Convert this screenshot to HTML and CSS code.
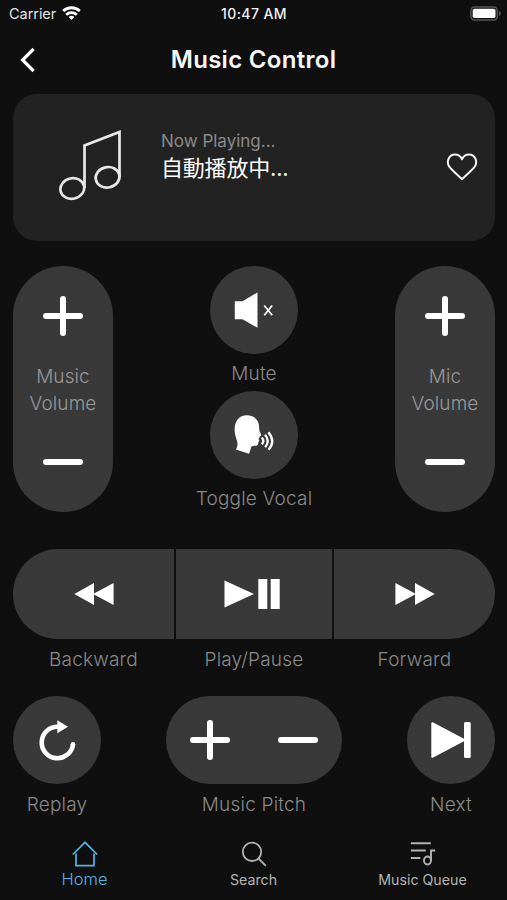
FILE: index.html
```html
<!DOCTYPE html>
<html lang="en">
<head>
<meta charset="utf-8">
<title>Music Control</title>
<link rel="stylesheet" href="styles.css">
</head>
<body>
<div class="app">
  <div class="status">
    <div class="carrier"><span>Carrier</span>
      <svg width="19" height="15" viewBox="0 0 19 15" fill="none" stroke="#fff" stroke-width="2.8"><path d="M1.200 5.100a12 12 0 0 1 16.600 0M4.200 8.800a7.700 7.700 0 0 1 10.600 0"/><path d="M9.500 14 6.600 11.100a4.200 4.200 0 0 1 5.800 0z" fill="#fff" stroke="none"/></svg>
    </div>
    <time class="clock">10:47 AM</time>
    <svg class="battery" width="32" height="15" viewBox="0 0 32 15"><rect x=".9" y=".9" width="26.4" height="13" rx="3.6" fill="none" stroke="#555" stroke-width="1.5"/><rect x="2.7" y="2.7" width="22.8" height="9.4" rx="1.8" fill="#fff"/><path d="M29 5a2.6 2.6 0 0 1 0 5z" fill="#555"/></svg>
  </div>
  <header class="nav">
    <svg class="back" width="18" height="26" viewBox="0 0 18 26" fill="none" stroke="#fff" stroke-width="3.2"><path d="M15.600 2 4.600 13l11 11"/></svg>
    <h1>Music Control</h1>
  </header>
  <main>
    <section class="card">
      <svg class="note" width="64" height="72" viewBox="0 0 64 72" fill="none" stroke="#e8e8e8" stroke-width="2.7"><path d="M25.500 58V15.500L60.500 2v45"/><ellipse cx="13.300" cy="58.500" rx="12" ry="10.200" transform="rotate(-12 13.300 58.500)"/><ellipse cx="48.600" cy="47.300" rx="12" ry="10.200" transform="rotate(-12 48.600 47.300)"/></svg>
      <div class="playing"><p class="now">Now Playing...</p><p class="song">自動播放中...</p></div>
      <svg class="heart" width="32" height="28" viewBox="0 0 32 28" fill="none" stroke="#f4f4f4" stroke-width="2" stroke-linejoin="round"><path d="M16 26.200C12.200 22.500 6.500 17.700 3.300 13.600 .2 9.400 2.400 1.500 9 1.500c3.400 0 5.700 2 7 4.800 1.300-2.800 3.600-4.800 7-4.800 6.600 0 8.800 7.900 5.700 12.100-3.200 4.100-8.900 8.900-12.700 12.600z"/></svg>
    </section>
    <section class="volumes">
      <div class="pill">
        <svg width="40" height="40" viewBox="0 0 40 40" class="sign"><path d="M3 20h34M20 3v34"/></svg>
        <p class="label">Music<br>Volume</p>
        <svg width="40" height="40" viewBox="0 0 40 40" class="sign"><path d="M3 20h34"/></svg>
      </div>
      <div class="middle">
        <div class="round"><svg width="40" height="40" viewBox="0 0 40 40"><path d="M.8 11.200H8.500L23.500 2.500V37.800L8.500 29.300H.8z" fill="#fff"/><path d="m30.200 15.500 8 9.800m0-9.800-8 9.800" stroke="#fff" stroke-width="1.700"/></svg></div>
        <p class="label">Mute</p>
        <div class="round"><svg width="42" height="42" viewBox="0 0 42 42"><path d="M2.800 35.500C5 32 5 28.500 3.200 24.500-1 12 3.500 1.300 13.800 1.300c8.500 0 12.800 6 12.400 13 0 2 .4 3.800 1.700 5.700.7 1.200.1 1.700-1.100 2.100 0 1-.2 1.600-.8 2.100-.9.600-.5 1.200.1 1.600.5.900.1 1.500-.8 1.900.4 3-1 4.200-3.500 4-3-.1-3.900 1-4.100 3.300L16 39.800z" fill="#fff"/><g fill="none" stroke="#fff" stroke-width="2.300"><path d="M28.700 23.500q3.200 3.300.2 6.700M32 20.800q5.400 6 .2 12.500M35.400 18.200q7.600 9 .2 17.500"/></g></svg></div>
        <p class="label">Toggle Vocal</p>
      </div>
      <div class="pill">
        <svg width="40" height="40" viewBox="0 0 40 40" class="sign"><path d="M3 20h34M20 3v34"/></svg>
        <p class="label">Mic<br>Volume</p>
        <svg width="40" height="40" viewBox="0 0 40 40" class="sign"><path d="M3 20h34"/></svg>
      </div>
    </section>
    <section class="transport">
      <div class="cell"><div class="key first"><svg width="40" height="24" viewBox="0 0 40 24"><path d="M.3 12 20 1v10.600L39.600 1v22L20 12.400V23z" fill="#fff"/></svg></div><p class="label">Backward</p></div>
      <div class="cell"><div class="key play"><svg width="56" height="32" viewBox="0 0 56 32" fill="#fff"><path d="M.5 2.500 30 16 .5 29.500zM34.300 1h9v30h-9zM46.700 1h9v30h-9z"/></svg></div><p class="label">Play/Pause</p></div>
      <div class="cell"><div class="key last"><svg width="40" height="24" viewBox="0 0 40 24"><path d="M39.700 12 20 1v10.600L.4 1v22L20 12.400V23z" fill="#fff"/></svg></div><p class="label">Forward</p></div>
    </section>
    <section class="bottom">
      <div class="stack"><div class="round"><svg width="40" height="44" viewBox="0 0 40 44"><path d="M36 26.200A15.700 15.700 0 1 1 20.500 8.800h2" fill="none" stroke="#fff" stroke-width="4.600"/><circle cx="36" cy="26.200" r="2.300" fill="#fff"/><path d="M20.300 2.300 31 8.800l-10.700 6.500z" fill="#fff"/></svg></div><p class="label">Replay</p></div>
      <div class="stack"><div class="pitch"><svg width="40" height="40" viewBox="0 0 40 40" class="sign"><path d="M3 20h34M20 3v34"/></svg><svg width="40" height="40" viewBox="0 0 40 40" class="sign"><path d="M3 20h34"/></svg></div><p class="label">Music Pitch</p></div>
      <div class="stack"><div class="round"><svg width="40" height="40" viewBox="0 0 40 40" fill="#fff"><path d="M1.300 3.200 33 20 1.300 36.800z" stroke="#fff" stroke-width="2" stroke-linejoin="round"/><rect x="33" y="2" width="6.700" height="36" rx="1.500"/></svg></div><p class="label">Next</p></div>
    </section>
  </main>
  <nav class="tabs">
    <a class="tab active"><svg width="26" height="26" viewBox="0 0 26 26" fill="none" stroke="currentColor" stroke-width="1.700"><path d="M.8 13.500 13 1.300l12.200 12.200M4 12.500v12.200h18V12.500"/></svg><span>Home</span></a>
    <a class="tab"><svg width="26" height="26" viewBox="0 0 26 26" fill="none" stroke="currentColor" stroke-width="1.800"><circle cx="11" cy="10.800" r="9.200"/><path d="m17.500 17.500 7.300 7.300"/></svg><span>Search</span></a>
    <a class="tab"><svg width="26" height="26" viewBox="0 0 26 26" fill="none" stroke="currentColor" stroke-width="1.900"><path d="M.8 2.300h20M.8 9.500h15M.8 17h9.500M25.200 9.500h-4.200V20"/><ellipse cx="17.500" cy="19.500" rx="3.500" ry="4"/></svg><span>Music Queue</span></a>
  </nav>
</div>
</body>
</html>
```

FILE: styles.css
```css
* { box-sizing: border-box; margin: 0; padding: 0; }
body { background: #0f0f0f; color: #fff; font-family: Inter, "Noto Sans CJK TC", sans-serif; }
svg { display: block; flex: none; }
.app { width: 507px; height: 900px; display: flex; flex-direction: column; overflow: hidden; }
.status { height: 28px; display: grid; grid-template-columns: 1fr auto 1fr; align-items: center; padding: 0 8px 2px 9px; }
.carrier { display: flex; align-items: center; gap: 6px; font-size: 14.5px; letter-spacing: -.05px; color: #e4e4e4; }
.clock { font-size: 14px; font-weight: 500; letter-spacing: .4px; color: #f0f0f0; padding-top: 1px; }
.battery { justify-self: end; margin-right: -3px; }
.nav { height: 66px; display: grid; grid-template-columns: 60px 1fr 60px; align-items: center; padding-bottom: 2px; }
.back { margin-left: 18px; }
h1 { font-size: 24px; line-height: 30px; font-weight: 600; text-align: center; letter-spacing: .3px; color: #f8f8f8; }
main { padding: 0 12px 0 13px; }
.card { height: 147px; border-radius: 24px; background: #222; display: flex; align-items: flex-start; padding: 36px 18px 0 46px; }
.playing { margin-left: 38px; flex: 1; }
.now { font-size: 17px; line-height: 22px; color: #8a8a8a; }
.song { font-size: 22px; line-height: 30px; color: #fff; letter-spacing: -.2px; padding-top: 1px; }
.heart { margin-top: 23px; margin-right: -1px; }
.volumes { margin-top: 25px; height: 246px; display: flex; justify-content: space-between; }
.pill { width: 100px; height: 246px; border-radius: 50px; background: #393939; display: flex; flex-direction: column; align-items: center; padding-top: 30px; }
.sign { fill: none; stroke: #fff; stroke-width: 6; stroke-linecap: round; }
.label { font-size: 19px; font-weight: 300; line-height: 24px; text-align: center; color: #8a8a8a; white-space: nowrap; letter-spacing: .2px; }
.pill .label { color: #989898; line-height: 27px; margin: 27px 0 25px; letter-spacing: .1px; }
.middle { display: flex; flex-direction: column; align-items: center; }
.round { width: 88px; height: 88px; flex: none; border-radius: 50%; background: #393939; display: flex; align-items: center; justify-content: center; }
.middle .label { height: 37px; flex: none; padding-top: 8px; }
.transport { margin-top: 37px; display: grid; grid-template-columns: 161px 155.500px 161px; justify-content: space-between; }
.key { height: 90px; background: #393939; display: flex; align-items: center; justify-content: center; }
.play { padding-right: 5px; }
.first { border-radius: 45px 0 0 45px; }
.last { border-radius: 0 45px 45px 0; }
.cell .label, .stack .label { padding-top: 9px; }
.bottom { margin-top: 24px; display: flex; justify-content: space-between; }
.stack { width: 176px; }
.stack:first-child, .stack:last-child { width: 88px; }
.pitch { height: 88px; border-radius: 44px; background: #393939; display: flex; align-items: center; justify-content: center; gap: 48px; }
.tabs { margin-top: 24px; display: grid; grid-template-columns: repeat(3, 1fr); }
.tab { display: flex; flex-direction: column; align-items: center; gap: 3px; color: #b3b3b3; font-size: 14.200px; line-height: 20px; }
.active { color: #4eb5e4; font-size: 16.500px; font-weight: 300; gap: 2px; }
```
